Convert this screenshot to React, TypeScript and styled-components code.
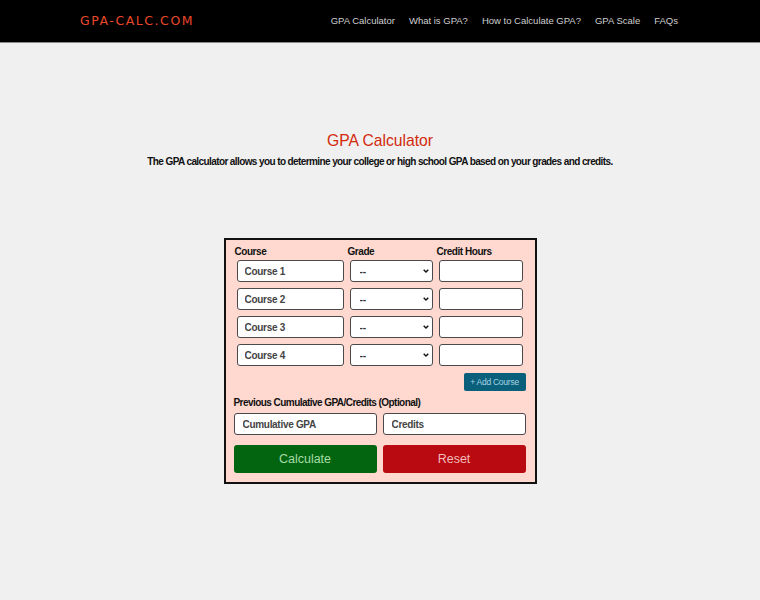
import React from "react";
import styled, { createGlobalStyle } from "styled-components";

const Global = createGlobalStyle`
  html, body { margin: 0; padding: 0; }
  body {
    background: #f0f0f1;
    font-family: "Liberation Sans", Arial, sans-serif;
    color: #111;
  }
  * { box-sizing: border-box; }
`;

const Header = styled.header`
  height: 43px;
  background: #000;
  border-bottom: 1px solid #8a8a8a;
  display: flex;
  align-items: center;
  justify-content: space-between;
  padding: 0 82px 0 80px;
`;

const Logo = styled.div`
  color: #e8482a;
  font-family: "DejaVu Sans", "Liberation Sans", sans-serif;
  font-size: 12.5px;
  letter-spacing: 1.55px;
  font-weight: 400;
  line-height: 14px;
`;

const Nav = styled.nav`
  display: flex;
  gap: 14px;
`;

const NavLink = styled.a`
  color: #cfcfcf;
  font-size: 9.5px;
  text-decoration: none;
  line-height: 12px;
`;

const Main = styled.main`
  display: flex;
  flex-direction: column;
  align-items: center;
  padding-top: 88px;
`;

const Title = styled.h1`
  margin: 0;
  color: #d22a0c;
  font-size: 15.7px;
  font-weight: 400;
  line-height: 20px;
`;

const Subtitle = styled.p`
  margin: 4px 0 0;
  font-size: 10px;
  font-weight: 700;
  line-height: 14px;
  letter-spacing: -0.6px;
  color: #111;
`;

const Card = styled.form`
  margin-top: 69px;
  width: 313px;
  background: #ffd9cf;
  border: 2px solid #111;
  padding: 6px 9px 9px 8px;
  display: flex;
  flex-direction: column;
`;

const Table = styled.div`
  display: grid;
  grid-template-columns: 113px 89px 90px;
`;

const ColLabel = styled.div`
  font-size: 10px;
  font-weight: 700;
  line-height: 11px;
  letter-spacing: -0.45px;
  padding-left: 1px;
`;

const Cell = styled.div`
  padding: 3px;
  position: relative;
`;

const TextInput = styled.input`
  display: block;
  width: 100%;
  height: 22px;
  border: 1.5px solid #4a4a4a;
  border-radius: 3px;
  background: #fff;
  padding: 0 0 0 7px;
  font-family: "Liberation Sans", Arial, sans-serif;
  font-size: 10px;
  font-weight: 700;
  letter-spacing: -0.3px;
  color: #444;
  &::placeholder { color: #444; opacity: 1; }
  outline: none;
`;

const Select = styled.select`
  display: block;
  width: 100%;
  height: 22px;
  border: 1.5px solid #4a4a4a;
  border-radius: 3px;
  background: #fff;
  padding: 0 0 0 9px;
  appearance: none;
  font-family: "Liberation Sans", Arial, sans-serif;
  font-size: 10px;
  font-weight: 700;
  color: #333;
  outline: none;
`;

const Chevron = styled.svg`
  position: absolute;
  right: 7px;
  top: 12px;
  width: 6px;
  height: 4px;
  pointer-events: none;
`;

const AddRow = styled.div`
  display: flex;
  justify-content: flex-end;
  margin-top: 4px;
`;

const AddButton = styled.button`
  width: 62px;
  height: 18px;
  background: #0a5f7b;
  color: #a9d5e4;
  border: none;
  border-radius: 2px;
  font-family: "Liberation Sans", Arial, sans-serif;
  font-size: 8.5px;
  letter-spacing: -0.25px;
  padding: 0;
`;

const SectionLabel = styled.div`
  margin-top: 6px;
  font-size: 10px;
  font-weight: 700;
  line-height: 12px;
  letter-spacing: -0.55px;
`;

const Pair = styled.div<{ $mt: number }>`
  display: grid;
  grid-template-columns: 1fr 1fr;
  gap: 6px;
  margin-top: ${(p) => p.$mt}px;
`;

const WideInput = styled(TextInput)`
  padding-left: 8px;
`;

const ActionButton = styled.button<{ $bg: string; $fg: string }>`
  height: 28px;
  border: none;
  border-radius: 3px;
  background: ${(p) => p.$bg};
  color: ${(p) => p.$fg};
  font-family: "Liberation Sans", Arial, sans-serif;
  font-size: 12.5px;
  padding: 0;
`;

const navItems = ["GPA Calculator", "What is GPA?", "How to Calculate GPA?", "GPA Scale", "FAQs"];

export default function App() {
  return (
    <>
      <Global />
      <Header>
        <Logo>GPA-CALC.COM</Logo>
        <Nav>
          {navItems.map((n) => (
            <NavLink key={n} href="#">{n}</NavLink>
          ))}
        </Nav>
      </Header>
      <Main>
        <Title>GPA Calculator</Title>
        <Subtitle>
          The GPA calculator allows you to determine your college or high school GPA based on your grades and credits.
        </Subtitle>
        <Card onSubmit={(e) => e.preventDefault()}>
          <Table>
            <ColLabel>Course</ColLabel>
            <ColLabel>Grade</ColLabel>
            <ColLabel>Credit Hours</ColLabel>
            {[1, 2, 3, 4].map((i) => (
              <React.Fragment key={i}>
                <Cell>
                  <TextInput defaultValue={`Course ${i}`} />
                </Cell>
                <Cell>
                  <Select defaultValue="--">
                    <option>--</option>
                    <option>A</option>
                    <option>B</option>
                  </Select>
                  <Chevron viewBox="0 0 6 4">
                    <path d="M0.7 0.7 L3 3 L5.3 0.7" fill="none" stroke="#111" strokeWidth="1.4" />
                  </Chevron>
                </Cell>
                <Cell>
                  <TextInput />
                </Cell>
              </React.Fragment>
            ))}
          </Table>
          <AddRow>
            <AddButton type="button">+ Add Course</AddButton>
          </AddRow>
          <SectionLabel>Previous Cumulative GPA/Credits (Optional)</SectionLabel>
          <Pair $mt={4}>
            <WideInput placeholder="Cumulative GPA" />
            <WideInput placeholder="Credits" />
          </Pair>
          <Pair $mt={10}>
            <ActionButton type="button" $bg="#046510" $fg="#a6dca6">Calculate</ActionButton>
            <ActionButton type="button" $bg="#b80a10" $fg="#f3bcbc">Reset</ActionButton>
          </Pair>
        </Card>
      </Main>
    </>
  );
}
